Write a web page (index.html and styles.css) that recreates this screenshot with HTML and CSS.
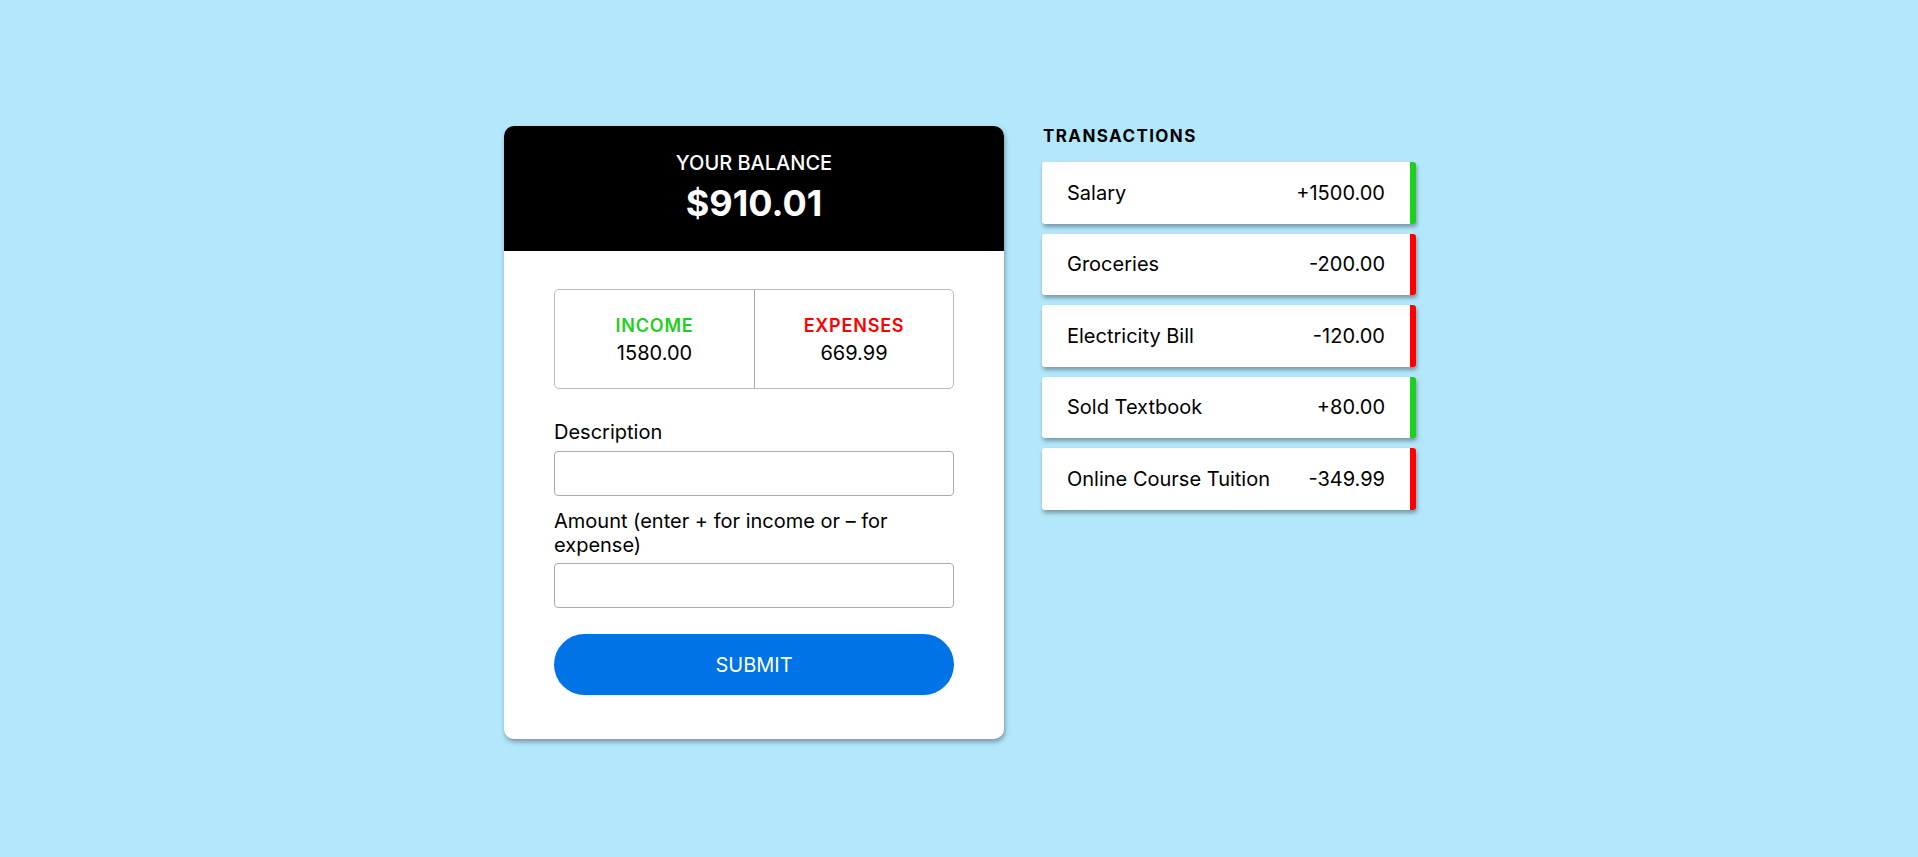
FILE: index.html
```html
<!DOCTYPE html>
<html lang="en">
<head>
<meta charset="utf-8">
<title>Expense Tracker</title>
<link rel="stylesheet" href="styles.css">
</head>
<body>
<main class="app">
  <section class="card">
    <header class="card-head">
      <h4 class="balance-label">YOUR BALANCE</h4>
      <h1 class="balance">$910.01</h1>
    </header>
    <div class="card-body">
      <div class="summary">
        <div class="summary-cell">
          <span class="summary-label income">INCOME</span>
          <span class="summary-value">1580.00</span>
        </div>
        <div class="summary-cell">
          <span class="summary-label expense">EXPENSES</span>
          <span class="summary-value">669.99</span>
        </div>
      </div>
      <form class="form">
        <label class="field-label" for="desc">Description</label>
        <input class="field-input" id="desc" type="text">
        <label class="field-label second" for="amt">Amount (enter + for income or – for expense)</label>
        <input class="field-input" id="amt" type="text">
        <button class="submit" type="button">SUBMIT</button>
      </form>
    </div>
  </section>
  <section class="transactions">
    <h3 class="tx-title">TRANSACTIONS</h3>
    <ul class="tx-list">
      <li class="tx plus"><span>Salary</span><span>+1500.00</span></li>
      <li class="tx minus"><span>Groceries</span><span>-200.00</span></li>
      <li class="tx minus"><span>Electricity Bill</span><span>-120.00</span></li>
      <li class="tx plus"><span>Sold Textbook</span><span>+80.00</span></li>
      <li class="tx minus"><span>Online Course Tuition</span><span>-349.99</span></li>
    </ul>
  </section>
</main>
</body>
</html>
```

FILE: styles.css
```css
* { box-sizing: border-box; }

html, body {
  margin: 0;
  padding: 0;
}

body {
  background: #b3e8fc;
  font-family: "Inter", "Liberation Sans", sans-serif;
  color: #000;
  min-height: 857px;
}

.app {
  display: flex;
  justify-content: center;
  align-items: flex-start;
  gap: 38px;
  padding-top: 126px;
  padding-left: 2px;
}

.card {
  width: 500px;
  background: #fff;
  border-radius: 10px;
  overflow: hidden;
  box-shadow: 1px 3px 5px rgba(0, 0, 0, 0.35);
}

.card-head {
  background: #000;
  color: #fff;
  text-align: center;
  padding: 25px 0 26px;
}

.balance-label {
  margin: 0;
  font-size: 20px;
  line-height: 24px;
  font-weight: 500;
}

.balance {
  margin: 6px 0 0;
  font-size: 36px;
  line-height: 44px;
  font-weight: 700;
}

.card-body {
  padding: 38px 50px 44px;
}

.summary {
  display: grid;
  grid-template-columns: 1fr 1fr;
  height: 100px;
  border: 1px solid #bbb;
  border-radius: 5px;
}

.summary-cell {
  display: flex;
  flex-direction: column;
  align-items: center;
  justify-content: center;
  padding-top: 2px;
}

.summary-cell + .summary-cell {
  border-left: 1px solid #aaa;
}

.summary-label {
  font-size: 18px;
  line-height: 22px;
  font-weight: 600;
  letter-spacing: 0.8px;
  margin-bottom: 3.5px;
}

.summary-label.income { color: #1fcf1f; }
.summary-label.expense { color: #ff0000; }

.summary-value {
  font-size: 20px;
  line-height: 24px;
}

.form {
  display: flex;
  flex-direction: column;
}

.field-label {
  font-size: 20px;
  line-height: 24px;
  margin-top: 31px;
  margin-bottom: 6.5px;
}

.field-label.second {
  margin-top: 13px;
}

.field-input {
  height: 45px;
  border: 1px solid #aaa;
  border-radius: 4px;
  font-family: inherit;
  font-size: 18px;
  padding: 0 10px;
  background: #fff;
}

.submit {
  margin-top: 26px;
  height: 61px;
  border: 0;
  border-radius: 31px;
  background: #0073e6;
  color: #fff;
  font-family: inherit;
  font-size: 20px;
  font-weight: 400;
  cursor: pointer;
}

.transactions {
  width: 374px;
}

.tx-title {
  margin: 0;
  font-size: 17px;
  line-height: 20px;
  font-weight: 700;
  letter-spacing: 1.4px;
  padding-left: 1px;
}

.tx-list {
  list-style: none;
  margin: 16px 0 0;
  padding: 0;
  display: flex;
  flex-direction: column;
  gap: 10px;
}

.tx {
  height: 61.5px;
  display: flex;
  align-items: center;
  justify-content: space-between;
  background: #fff;
  padding: 0 25px;
  font-size: 20px;
  border-right: 6px solid;
  border-radius: 3px;
  box-shadow: 1px 3px 4px rgba(0, 0, 0, 0.35);
}

.tx.plus { border-right-color: #1fcf1f; }
.tx.minus { border-right-color: #ff0000; }
```
